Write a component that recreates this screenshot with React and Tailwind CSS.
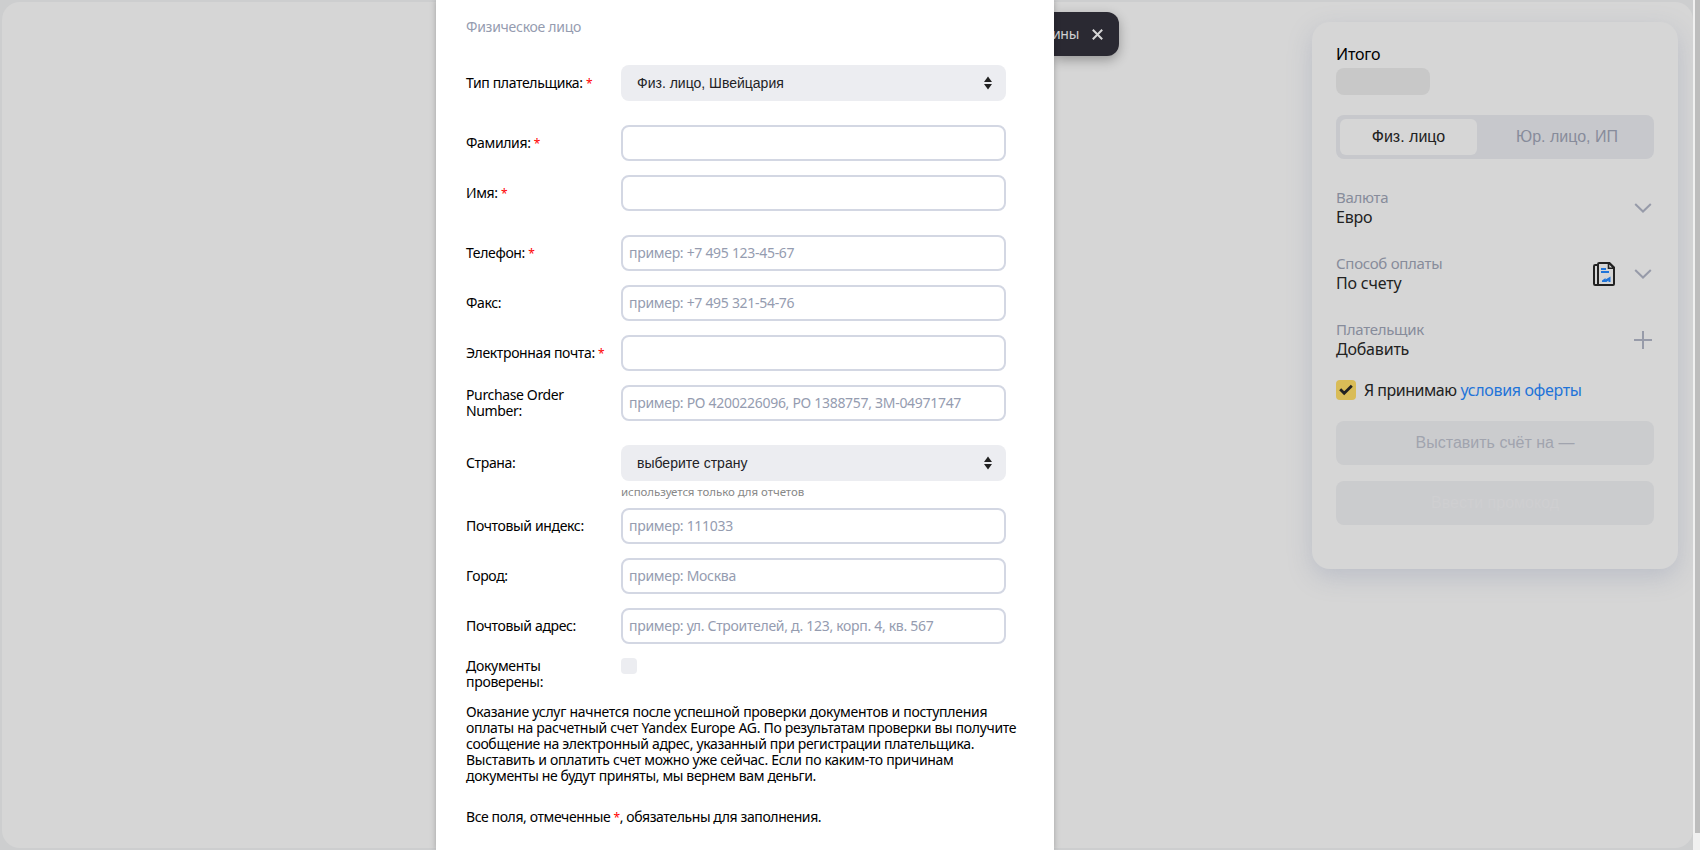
const NOTO = "font-['Noto_Sans','Liberation_Sans',sans-serif]";
const ARIAL = "font-['Liberation_Sans',Arial,sans-serif]";

function Star() {
  return <span className="text-[12px] leading-3 text-[#ff0000]">*</span>;
}

function Row({ label, required, gap = "mt-[14px]", children }) {
  return (
    <div className={`flex ${gap}`}>
      <div className="flex h-9 w-[155px] shrink-0 items-center leading-4 tracking-[-0.36px]">
        <span className="max-w-[142px]">
          {label}
          {required && <> <Star /></>}
        </span>
      </div>
      {children}
    </div>
  );
}

function Input({ placeholder = "" }) {
  return (
    <input
      className="block h-9 w-[385px] rounded-[8px] border-2 border-[#d3d7e3] bg-white px-[6px] pb-[2px] text-sm tracking-[-0.3px] text-black placeholder:text-[#959cb0] placeholder:opacity-100"
      placeholder={placeholder}
    />
  );
}

function Select({ value }) {
  return (
    <button className={`flex h-9 w-[385px] items-center justify-between rounded-[8px] bg-[#ecedf1] pl-4 pr-[14px] text-sm text-[#222226] ${ARIAL}`}>
      <span>{value}</span>
      <svg width="8" height="14" viewBox="0 0 8 14" fill="#222222">
        <path d="M4 0.5 8 6H0Z" />
        <path d="M4 13.5 8 8H0Z" />
      </svg>
    </button>
  );
}

function Chevron() {
  return (
    <svg width="18" height="10" viewBox="0 0 18 10" fill="none" stroke="#979ba9" strokeWidth="2">
      <path d="M1.2 1 9 8.5 16.8 1" />
    </svg>
  );
}

function InvoiceIcon() {
  return (
    <svg width="22" height="24" viewBox="0 0 22 24" fill="none">
      <path d="M5 3H2.2Q1 3 1 4.2V21.8Q1 23 2.2 23H20Q21 23 21 22V5.5L16.5 1H6.2Q5 1 5 2.2V23" stroke="#222" strokeWidth="2" />
      <path d="M15.5 1V6.2H21L16 1" stroke="#222" strokeWidth="1.6" />
      <path d="M8 7H13M8 10H16" stroke="#1f74d9" strokeWidth="2" />
      <path d="M9 20V18.5L12.5 16V17.5L17.5 14.5V20H15.5V18.5L13.5 20Z" fill="#1f74d9" />
    </svg>
  );
}

function Option({ title, value, children }) {
  return (
    <div className="flex h-[66px] items-center justify-between">
      <div className="-mt-[2px]">
        <div className="text-[15px] leading-5 tracking-[-0.28px] text-[#878c9b]">{title}</div>
        <div className="text-base leading-5 tracking-[-0.2px] text-[#222]">{value}</div>
      </div>
      <div className="flex items-center">{children}</div>
    </div>
  );
}

function PayerForm() {
  return (
    <main className="z-10 h-full w-[618px] shrink-0 overflow-hidden bg-white px-[30px] pt-[17px] text-sm text-black shadow-[0_0_6px_rgba(0,0,0,0.25)]">
      <div className="h-5 leading-5 tracking-[-0.27px] text-[#959cb0]">Физическое лицо</div>
      <Row label="Тип плательщика:" required gap="mt-7"><Select value="Физ. лицо, Швейцария" /></Row>
      <Row label="Фамилия:" required gap="mt-6"><Input /></Row>
      <Row label="Имя:" required><Input /></Row>
      <Row label="Телефон:" required gap="mt-6"><Input placeholder="пример: +7 495 123-45-67" /></Row>
      <Row label="Факс:"><Input placeholder="пример: +7 495 321-54-76" /></Row>
      <Row label="Электронная почта:" required><Input /></Row>
      <Row label="Purchase Order Number:"><Input placeholder="пример: РО 4200226096, РО 1388757, ЗМ-04971747" /></Row>
      <Row label="Страна:" gap="mt-6"><Select value="выберите страну" /></Row>
      <div className="ml-[155px] mt-1 h-[14px] text-[11.5px] leading-[14px] tracking-[-0.07px] text-[#888]">используется только для отчетов</div>
      <Row label="Почтовый индекс:" gap="mt-[9px]"><Input placeholder="пример: 111033" /></Row>
      <Row label="Город:"><Input placeholder="пример: Москва" /></Row>
      <Row label="Почтовый адрес:"><Input placeholder="пример: ул. Строителей, д. 123, корп. 4, кв. 567" /></Row>
      <div className="mt-[14px] flex">
        <div className="w-[155px] shrink-0 leading-4 tracking-[-0.3px]">Документы<br />проверены:</div>
        <div className="size-4 rounded-[4px] bg-[#ecedf1]" />
      </div>
      <p className="mt-[14px] whitespace-nowrap leading-4 tracking-[-0.32px]">
        <span className="tracking-[-0.28px]">Оказание услуг начнется после успешной проверки документов и поступления</span><br />
        оплаты на расчетный счет Yandex Europe AG. По результатам проверки вы получите<br />
        <span className="tracking-[-0.34px]">сообщение на электронный адрес, указанный при регистрации плательщика.</span><br />
        <span className="tracking-[-0.3px]">Выставить и оплатить счет можно уже сейчас. Если по каким-то причинам</span><br />
        <span className="tracking-[-0.35px]">документы не будут приняты, мы вернем вам деньги.</span>
      </p>
      <p className="mt-[25px] leading-4 tracking-[-0.4px]">
        Все поля, отмеченные <Star />, обязательны для заполнения.
      </p>
    </main>
  );
}

function Summary() {
  return (
    <aside className="ml-auto mr-[15px] mt-5 h-[547px] w-[366px] rounded-[18px] bg-[#d6d6d6] px-6 pt-5 shadow-[0_8px_24px_rgba(120,130,160,0.28)]">
      <div className="h-6 text-base leading-6 tracking-[-0.2px] text-black">Итого</div>
      <div className="mt-[2px] h-[27px] w-[94px] rounded-[8px] bg-[#c8c8c8]" />
      <div className={`mt-5 flex h-11 rounded-[8px] bg-[#c7c8cc] p-1 text-base ${ARIAL}`}>
        <div className="flex w-[137px] items-center justify-center rounded-[6px] bg-[#d6d6d6] text-[#222]">Физ. лицо</div>
        <div className="flex flex-1 items-center justify-center pl-[7px] text-[#878c9b]">Юр. лицо, ИП</div>
      </div>
      <div className="mt-4">
        <Option title="Валюта" value="Евро"><span className="mr-[2px]"><Chevron /></span></Option>
        <Option title="Способ оплаты" value="По счету">
          <span className="mr-[19px]"><InvoiceIcon /></span>
          <span className="mr-[2px]"><Chevron /></span>
        </Option>
        <Option title="Плательщик" value="Добавить">
          <svg className="mr-[2px]" width="18" height="18" viewBox="0 0 18 18" stroke="#979ba9" strokeWidth="2">
            <path d="M9 0V18M0 9H18" />
          </svg>
        </Option>
      </div>
      <div className="mt-[7px] flex h-5 items-center whitespace-nowrap text-base leading-5 text-[#222]">
        <span className="mr-2 flex size-5 items-center justify-center rounded-[4px] bg-[#d9bc57]">
          <svg width="14" height="12" viewBox="0 0 14 12" fill="none" stroke="#222" strokeWidth="2.8">
            <path d="M1.2 5.2 5.2 9.2 12.8 1.8" />
          </svg>
        </span>
        <span className="tracking-[-0.5px]">Я принимаю</span>
        <a className="ml-1 tracking-[-0.35px] text-[#1f74d9]">условия оферты</a>
      </div>
      <button className={`mt-[21px] block h-11 w-full rounded-[8px] bg-[#cbccce] text-base text-[#a1a4ae] ${ARIAL}`}>Выставить счёт на —</button>
      <button className={`mt-4 block h-11 w-full rounded-[8px] bg-[#cbccce] text-base text-[#cfcfd1] ${ARIAL}`}>Ввести промокод</button>
    </aside>
  );
}

export default function App() {
  return (
    <div className={`flex h-[850px] w-[1700px] overflow-hidden bg-[#cdcecf] ${NOTO}`}>
      <div className="flex w-[1693px] shrink-0">
        <div className="my-[2px] ml-[2px] w-[434px] shrink-0 rounded-l-[18px] bg-[#d6d6d6]" />
        <PayerForm />
        <div className="my-[2px] flex flex-1 items-start rounded-r-[18px] bg-[#d6d6d6]">
          <div className="mt-[10px] flex h-11 w-[65px] shrink-0 items-center justify-end rounded-r-[12px] bg-[#2a2932] pr-4 shadow-[0_4px_12px_rgba(0,0,0,0.3)]">
            <span className="text-sm tracking-[-0.3px] text-[#d0d0d2]">ины</span>
            <svg className="ml-[13px] shrink-0" width="11" height="11" viewBox="0 0 11 11" stroke="#d6d6d6" strokeWidth="2">
              <path d="M0.8 0.8 10.2 10.2M10.2 0.8 0.8 10.2" />
            </svg>
          </div>
          <Summary />
        </div>
      </div>
      <div className="w-[7px] bg-[#f0f0f0] pl-[2px]">
        <div className="h-[833px] bg-[#bdbdbd]" />
      </div>
    </div>
  );
}
